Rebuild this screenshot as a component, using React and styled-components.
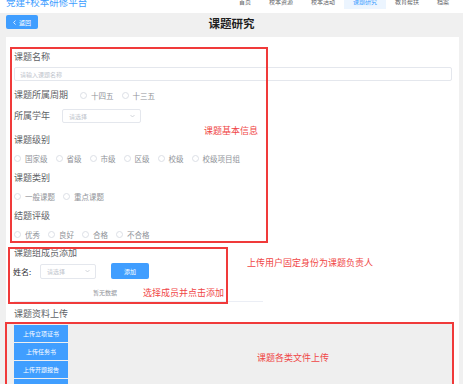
import React from "react";
import styled, { createGlobalStyle } from "styled-components";

const Global = createGlobalStyle`
  html, body { margin: 0; padding: 0; background: #f0f0f0; overflow: hidden; }
  body { font-family: "Noto Sans CJK SC", "Noto Sans", sans-serif; }
  * { box-sizing: border-box; }
`;

const Page = styled.div`
  position: relative;
  width: 463px;
  height: 384px;
  overflow: hidden;
  background: #f0f0f0;
`;

const Header = styled.header`
  height: 13px;
  background: #fff;
  overflow: hidden;
`;

const HeaderRow = styled.div`
  display: flex;
  align-items: stretch;
  height: 15px;
  margin-top: -6px;
`;

const Logo = styled.div`
  display: flex;
  align-items: center;
  padding-left: 6px;
  font-size: 9.5px;
  color: #409eff;
  white-space: nowrap;
`;

const Nav = styled.nav`
  display: flex;
  margin-left: auto;
  padding-right: 5px;
`;

const NavItem = styled.div`
  display: flex;
  align-items: center;
  padding: 0 9px;
  font-size: 6px;
  color: ${(p) => (p.$active ? "#409eff" : "#606266")};
  background: ${(p) => (p.$active ? "#ecf5ff" : "transparent")};
  white-space: nowrap;
`;

const TopBar = styled.div`
  display: grid;
  grid-template-columns: 1fr auto 1fr;
  align-items: start;
  height: 24px;
  padding-top: 2px;
`;

const BackButton = styled.button`
  justify-self: start;
  margin-left: 6px;
  width: 32px;
  height: 14px;
  border: none;
  border-radius: 2px;
  background: #409eff;
  color: #fff;
  font-family: inherit;
  font-size: 6px;
  display: flex;
  align-items: center;
  justify-content: center;
  gap: 3px;
  padding: 0;
`;

const Title = styled.h1`
  margin: 0;
  font-size: 11.5px;
  line-height: 16px;
  font-weight: 700;
  color: #1f1f1f;
`;

const Card = styled.main`
  margin: 0 4px 0 6px;
  background: #fff;
  padding: 14px 7px 0 8px;
  height: 400px;
`;

const Label = styled.div`
  font-size: 9px;
  line-height: 12px;
  color: #606266;
  margin-top: ${(p) => p.$mt || 0}px;
  white-space: nowrap;
`;

const TextInput = styled.div`
  margin-top: 4px;
  height: 14px;
  border: 1px solid #e4e7ed;
  border-radius: 2px;
  display: flex;
  align-items: center;
  padding-left: 5px;
  font-size: 6px;
  color: #c0c4cc;
`;

const InlineRow = styled.div`
  display: flex;
  align-items: center;
  margin-top: ${(p) => p.$mt || 0}px;
  gap: ${(p) => p.$gap || 0}px;
`;

const RadioGroup = styled.div`
  display: flex;
  align-items: center;
  gap: 8px;
  height: 12px;
  margin-top: ${(p) => p.$mt || 0}px;
`;

const RadioItem = styled.label`
  display: flex;
  align-items: center;
  gap: 4px;
  font-size: 7.5px;
  color: #909399;
  white-space: nowrap;
`;

const Circle = styled.span`
  width: 7px;
  height: 7px;
  border-radius: 50%;
  border: 1px solid #dcdfe6;
  background: #fff;
  flex: none;
`;

const SelectBox = styled.div`
  width: ${(p) => p.$w}px;
  height: ${(p) => p.$h}px;
  border: 1px solid #e4e7ed;
  border-radius: 2px;
  display: flex;
  align-items: center;
  justify-content: space-between;
  padding: 0 5px 0 6px;
  font-size: 6px;
  color: #c0c4cc;
`;

const NameLabel = styled.span`
  font-size: 8px;
  color: #303133;
  width: 27px;
  margin-left: -1px;
`;

const AddButton = styled.button`
  margin-left: 15px;
  width: 38px;
  height: 16px;
  border: none;
  border-radius: 2px;
  background: #409eff;
  color: #fff;
  font-family: inherit;
  font-size: 6px;
  padding: 0;
`;

const EmptyTable = styled.div`
  margin-top: 4px;
  width: 249px;
  height: 19px;
  border-bottom: 1px solid #ebeef5;
  display: flex;
  align-items: center;
  padding-left: 79px;
  font-size: 6px;
  color: #909399;
`;

const UploadArea = styled.div`
  margin: 4px -1px 0 -7px;
  background: #efefef;
  padding: 1px 0 0 7px;
  display: flex;
  flex-direction: column;
  gap: 1px;
  height: 80px;
`;

const UploadButton = styled.button`
  width: 54px;
  height: 17px;
  flex: none;
  border: none;
  background: #409eff;
  color: #fff;
  font-family: inherit;
  font-size: 6px;
  padding: 0;
`;

const NoteBox = styled.div`
  position: absolute;
  border: 2px solid #f03a3a;
  pointer-events: none;
`;

const NoteText = styled.div`
  position: absolute;
  font-size: 9px;
  line-height: 12px;
  color: #f04646;
  white-space: nowrap;
`;

const Chevron = () => (
  <svg width="5" height="4" viewBox="0 0 5 4">
    <polyline points="0.5,1 2.5,3 4.5,1" fill="none" stroke="#c0c4cc" strokeWidth="0.7" />
  </svg>
);

const BackIcon = () => (
  <svg width="3" height="5" viewBox="0 0 3 5">
    <polyline points="2.5,0.5 0.6,2.5 2.5,4.5" fill="none" stroke="#fff" strokeWidth="0.8" />
  </svg>
);

const Radios = ({ items, mt }) => (
  <RadioGroup $mt={mt}>
    {items.map((t) => (
      <RadioItem key={t}>
        <Circle />
        {t}
      </RadioItem>
    ))}
  </RadioGroup>
);

const nav = ["首页", "校本资源", "校本活动", "课题研究", "教育帮扶", "档案"];

export default function App() {
  return (
    <Page>
      <Global />
      <Header>
        <HeaderRow>
          <Logo>党建+校本研修平台</Logo>
          <Nav>
            {nav.map((n) => (
              <NavItem key={n} $active={n === "课题研究"}>
                {n}
              </NavItem>
            ))}
          </Nav>
        </HeaderRow>
      </Header>
      <TopBar>
        <BackButton>
          <BackIcon />
          返回
        </BackButton>
        <Title>课题研究</Title>
        <span />
      </TopBar>
      <Card>
        <Label>课题名称</Label>
        <TextInput>请输入课题名称</TextInput>
        <InlineRow $mt={8} $gap={12}>
          <Label>课题所属周期</Label>
          <Radios items={["十四五", "十三五"]} />
        </InlineRow>
        <InlineRow $mt={8} $gap={12}>
          <Label>所属学年</Label>
          <SelectBox $w={79} $h={14}>
            请选择
            <Chevron />
          </SelectBox>
        </InlineRow>
        <Label $mt={11}>课题级别</Label>
        <Radios mt={6.5} items={["国家级", "省级", "市级", "区级", "校级", "校级项目组"]} />
        <Label $mt={7}>课题类别</Label>
        <Radios mt={7} items={["一般课题", "重点课题"]} />
        <Label $mt={7}>结题评级</Label>
        <Radios mt={6.5} items={["优秀", "良好", "合格", "不合格"]} />

        <Label $mt={7}>课题组成员添加</Label>
        <InlineRow $mt={4}>
          <NameLabel>姓名:</NameLabel>
          <SelectBox $w={56} $h={15}>
            请选择
            <Chevron />
          </SelectBox>
          <AddButton>添加</AddButton>
        </InlineRow>
        <EmptyTable>暂无数据</EmptyTable>

        <Label $mt={6}>课题资料上传</Label>
        <UploadArea>
          <UploadButton>上传立项证书</UploadButton>
          <UploadButton>上传任务书</UploadButton>
          <UploadButton>上传开题报告</UploadButton>
          <UploadButton>上传中期报告</UploadButton>
        </UploadArea>
      </Card>

      <NoteBox style={{ left: 10, top: 47, width: 258, height: 196 }} />
      <NoteText style={{ left: 204, top: 125 }}>课题基本信息</NoteText>
      <NoteBox style={{ left: 8, top: 247, width: 220, height: 57 }} />
      <NoteText style={{ left: 143, top: 287 }}>选择成员并点击添加</NoteText>
      <NoteText style={{ left: 247, top: 257 }}>上传用户固定身份为课题负责人</NoteText>
      <NoteBox style={{ left: 5, top: 322, width: 449, height: 80 }} />
      <NoteText style={{ left: 257, top: 352 }}>课题各类文件上传</NoteText>
    </Page>
  );
}
